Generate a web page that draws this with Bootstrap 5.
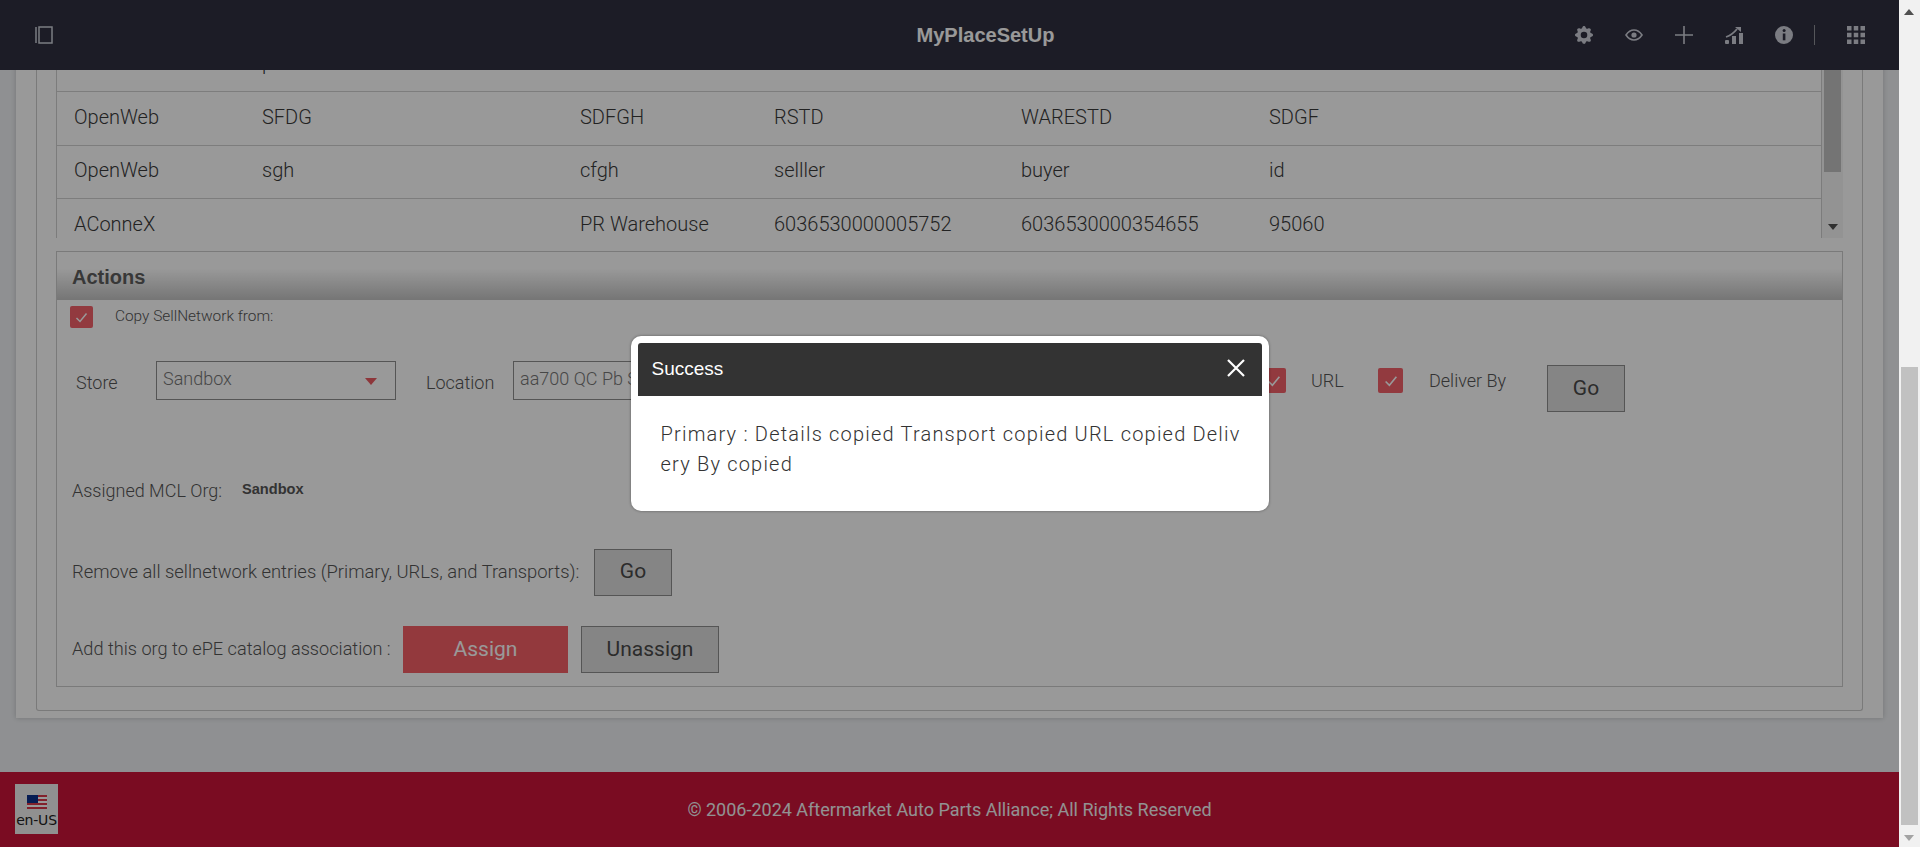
<!DOCTYPE html>
<html lang="en">
<head>
  <meta charset="UTF-8" />
  <meta name="viewport" content="width=device-width, initial-scale=1" />
  <title>MyPlaceSetUp</title>
  <link href="https://cdn.jsdelivr.net/npm/bootstrap@5.3.0/dist/css/bootstrap.min.css" rel="stylesheet" />
  <style>
    html, body { height: 100%; overflow: hidden; }
    body { font-family: Roboto, "Liberation Sans", sans-serif; color: #474747; background: #eef0f3; }

    /* shell */
    .app-main { position: relative; min-width: 0; }
    .top-bar { height: 70px; background: #2f3040; color: #cdcfd9; padding: 0 34px 0 35px; position: relative; z-index: 1; }
    .top-title { font-family: "Liberation Sans", sans-serif; font-size: 20px; font-weight: 700; color: #fff; position: absolute; left: 72px; right: 0; text-align: center; line-height: 70px; }
    .top-icons { margin-left: auto; gap: 32px; position: relative; }
    .top-icons svg { display: block; }
    .top-sep { width: 1px; height: 20px; background: #8e8f96; margin-left: -11px; }
    .page-clip { flex: 1 1 0; min-height: 0; overflow: hidden; padding: 0 16px 54px; }
    .page-foot { height: 75px; background: #cb143a; color: #f3f3f3; font-size: 18px; position: relative; flex: none; }
    .lang-tile { position: absolute; left: 15px; top: 12px; width: 43px; height: 50px; background: #f0f0f0; color: #222; font-family: "DejaVu Sans", sans-serif; font-size: 14px; letter-spacing: -.2px; line-height: 1; padding-top: 11px; }

    /* panels */
    .outer-sheet { flex: none; background: #fff; padding: 0 0 7px; box-shadow: 0 0 5px rgba(0,0,0,.2); }
    .inner-sheet { border: 1px solid #cbcbcb; border-top: 0; margin: 0 20px; padding: 0 19px 23px; border-radius: 0 0 3px 3px; }
    .grid-wrap { height: 200px; overflow: hidden; border-left: 1px solid #cfcfcf; }
    .grid-table { table-layout: fixed; font-size: 20px; font-weight: 300; margin: 0; color: #3a3a3a; }
    .grid-table td { height: 53.5px; padding: 0 17px 3px; vertical-align: middle; border-bottom: 1px solid #d0d0d0; white-space: nowrap; }
    .grid-table tr:last-child td { border-bottom: 0; }
    .col-a { width: 188px; } .col-b { width: 318px; } .col-c { width: 194px; }
    .col-d { width: 247px; } .col-e { width: 248px; }
    .fake-track { width: 22px; flex: none; background: #f6f6f6; border-left: 1px solid #cfcfcf; position: relative; }
    .fake-thumb { height: 134px; margin: 0 2px; background: #c1c1c1; }
    .arrow-down { position: absolute; left: 6px; bottom: 8px; border: 5px solid transparent; border-top: 6px solid #505050; border-bottom: 0; }

    .action-panel { border: 1px solid #cbcbcb; margin-top: 13px; padding-bottom: 13px; color: #555; font-size: 18px; font-weight: 300; }
    .action-head { height: 48px; background: linear-gradient(#fff 35%, #c4c4c4); font-family: "Liberation Sans", sans-serif; font-size: 20px; font-weight: 700; color: #5e5e5e; padding-left: 15px; line-height: 50px; }
    .tick { width: 25px; height: 25px; background: #f4616a; border-radius: 2px; flex: none; display: flex; align-items: center; justify-content: center; }
    .tick-small { width: 23px; height: 22px; }
    .row-copy { margin: 6px 0 0 13px; height: 22px; font-size: 15.4px; }
    .copy-label { margin-left: 22px; }
    .row-store { margin-top: 33px; height: 51px; padding-left: 19px; }
    .row-assigned { margin-top: 68px; height: 20px; padding-left: 15px; }
    .row-remove { margin-top: 49px; height: 46px; padding-left: 15px; }
    .row-add { margin-top: 31px; height: 47px; padding-left: 15px; }
    .field-label { line-height: 44px; }
    .store-label { width: 80px; }
    .location-label { margin-left: 30px; width: 87px; }
    .fake-select, .fake-input { width: 240px; height: 39px; border: 1px solid #8e8e8e; color: #777; padding-left: 6px; line-height: 34px; position: relative; flex: none; }
    .select-caret { position: absolute; right: 18px; top: 16px; border: 6px solid transparent; border-top: 7px solid #ec5a62; border-bottom: 0; }
    .tick-group { margin-left: 508px; margin-top: 7px; }
    .url-label { margin-left: 25px; width: 67px; line-height: 26px; }
    .deliver-label { margin-left: 26px; width: 118px; line-height: 26px; }
    .assigned-label { width: 170px; }
    .remove-label { width: 522px; font-size: 18.4px; }
    .add-label { width: 331px; font-size: 18.15px; padding-bottom: 2px; }
    .plain-btn { height: 47px; width: 78px; background: #dedede; border: 1px solid #8e8e8e; border-radius: 0; color: #4a4a4a; font-size: 21px; font-weight: 400; padding: 0; flex: none; }
    .go-top { margin-top: 4px; }
    .unassign-btn { width: 138px; margin-left: 13px; }
    .red-btn { height: 47px; width: 165px; background: #f55f67; border: 0; border-radius: 0; color: #fff; font-size: 21px; font-weight: 400; padding: 0; }
    .tiny-bold { font-family: "Liberation Sans", sans-serif; font-size: 14.6px; font-weight: 700; color: #555; }

    /* dialog on top */
    .dim-layer { position: absolute; inset: 0; width: auto; height: auto; background: #000; opacity: .4; z-index: 5; }
    .modal.dialog-host { position: absolute; inset: 0; width: auto; height: auto; z-index: 6; overflow: hidden; }
    .dialog-host .modal-dialog { max-width: 638px; margin: 336px auto 0; }
    .dialog-host .modal-content { border: 0; border-radius: 10px; padding: 7px; height: 175px; box-shadow: 0 0 3px rgba(0,0,0,.4); }
    .dialog-host .modal-header { height: 53px; background: #333; border: 0; border-radius: 3px 3px 0 0; padding: 0 17px 3px 14px; color: #fff; }
    .dialog-host .modal-title { font-family: "Liberation Sans", sans-serif; font-size: 19px; line-height: 1; }
    .dialog-host .modal-body { padding: 23px 17px 0 23px; font-size: 20px; font-weight: 300; line-height: 30px; letter-spacing: 1.2px; color: #333; word-break: break-all; }
    .close-x { background: none; border: 0; padding: 0; line-height: 0; }

    /* browser scrollbar */
    .page-scroll { width: 21px; flex: none; background: #f1f1f1; position: relative; }
    .page-thumb { position: absolute; left: 2px; right: 2px; top: 367px; height: 458px; background: #c1c1c1; }
    .bar-up { position: absolute; left: 5px; top: 9px; border: 5px solid transparent; border-bottom: 6px solid #505050; border-top: 0; }
    .bar-down { position: absolute; left: 5px; bottom: 6px; border: 5px solid transparent; border-top: 6px solid #a3a3a3; border-bottom: 0; }
  </style>
</head>
<body>
  <div class="d-flex vh-100">
    <div class="app-main d-flex flex-column flex-grow-1">

      <header class="top-bar d-flex align-items-center">
        <svg width="18" height="18" viewBox="0 0 18 18" fill="none" stroke="currentColor" stroke-width="1.5"><path d="M1 1v16"/><rect x="4" y="1" width="13" height="16"/></svg>
        <div class="top-title">MyPlaceSetUp</div>
        <div class="top-icons d-flex align-items-center">
          <svg width="18" height="18" viewBox="0 0 16 16" fill="currentColor"><path d="M9.405 1.05c-.413-1.4-2.397-1.4-2.81 0l-.1.34a1.464 1.464 0 0 1-2.105.872l-.31-.17c-1.283-.698-2.686.705-1.987 1.987l.169.311c.446.82.023 1.841-.872 2.105l-.34.1c-1.4.413-1.4 2.397 0 2.81l.34.1a1.464 1.464 0 0 1 .872 2.105l-.17.31c-.698 1.283.705 2.686 1.987 1.987l.311-.169a1.464 1.464 0 0 1 2.105.872l.1.34c.413 1.4 2.397 1.4 2.81 0l.1-.34a1.464 1.464 0 0 1 2.105-.872l.31.17c1.283.698 2.686-.705 1.987-1.987l-.169-.311a1.464 1.464 0 0 1 .872-2.105l.34-.1c1.4-.413 1.4-2.397 0-2.81l-.34-.1a1.464 1.464 0 0 1-.872-2.105l.17-.31c.698-1.283-.705-2.686-1.987-1.987l-.311.169a1.464 1.464 0 0 1-2.105-.872l-.1-.34zM8 10.93a2.929 2.929 0 1 1 0-5.86 2.929 2.929 0 0 1 0 5.858z"/></svg>
          <svg width="18" height="12" viewBox="0 0 18 12" fill="none" stroke="currentColor" stroke-width="1.6"><path d="M1 6c2-3 5-5 8-5s6 2 8 5c-2 3-5 5-8 5s-6-2-8-5z"/><circle cx="9" cy="6" r="2.6" fill="currentColor" stroke="none"/></svg>
          <svg width="18" height="18" viewBox="0 0 18 18" stroke="currentColor" stroke-width="1.6"><path d="M9 0v18M0 9h18"/></svg>
          <svg width="18" height="18" viewBox="0 0 18 18" fill="currentColor"><rect x="0" y="14" width="4" height="4" rx="1"/><rect x="7" y="10" width="4" height="8"/><rect x="14" y="7" width="4" height="11"/><path d="M1 11C4 10 8 8 12 3" fill="none" stroke="currentColor" stroke-width="1.8"/><path d="M10 1h6v5z"/></svg>
          <svg width="18" height="18" viewBox="0 0 18 18"><circle cx="9" cy="9" r="9" fill="currentColor"/><rect x="7.8" y="7.5" width="2.6" height="6.8" fill="#2f3040"/><circle cx="9.1" cy="4.6" r="1.5" fill="#2f3040"/></svg>
          <span class="top-sep"></span>
          <svg width="18" height="18" viewBox="0 0 18 18" fill="currentColor"><rect width="4.5" height="4.5"/><rect x="6.75" width="4.5" height="4.5"/><rect x="13.5" width="4.5" height="4.5"/><rect y="6.75" width="4.5" height="4.5"/><rect x="6.75" y="6.75" width="4.5" height="4.5"/><rect x="13.5" y="6.75" width="4.5" height="4.5"/><rect y="13.5" width="4.5" height="4.5"/><rect x="6.75" y="13.5" width="4.5" height="4.5"/><rect x="13.5" y="13.5" width="4.5" height="4.5"/></svg>
        </div>
      </header>

      <main class="page-clip d-flex flex-column justify-content-end">
        <div class="outer-sheet">
          <div class="inner-sheet">
            <div class="grid-wrap d-flex">
              <div class="flex-grow-1">
                <table class="table grid-table">
                  <colgroup><col class="col-a"><col class="col-b"><col class="col-c"><col class="col-d"><col class="col-e"><col></colgroup>
                  <tbody id="gridBody"></tbody>
                </table>
              </div>
              <div class="fake-track"><div class="fake-thumb"></div><span class="arrow-down"></span></div>
            </div>

            <section class="action-panel">
              <div class="action-head">Actions</div>
              <div class="row-copy d-flex align-items-center">
                <span class="tick tick-small"><svg width="13" height="11" viewBox="0 0 13 11" fill="none" stroke="#fff" stroke-width="1.5"><path d="M1.5 6l3.5 3.5L11.5 1.5"/></svg></span>
                <span class="copy-label">Copy SellNetwork from:</span>
              </div>
              <div class="row-store d-flex align-items-start">
                <span class="field-label store-label">Store</span>
                <div class="fake-select">Sandbox<span class="select-caret"></span></div>
                <span class="field-label location-label">Location</span>
                <div class="fake-input overflow-hidden text-nowrap">aa700 QC Pb Sandbox</div>
                <div class="tick-group d-flex align-items-start">
                  <span class="tick"><svg width="14" height="12" viewBox="0 0 13 11" fill="none" stroke="#fff" stroke-width="1.5"><path d="M1.5 6l3.5 3.5L11.5 1.5"/></svg></span>
                  <span class="url-label">URL</span>
                  <span class="tick"><svg width="14" height="12" viewBox="0 0 13 11" fill="none" stroke="#fff" stroke-width="1.5"><path d="M1.5 6l3.5 3.5L11.5 1.5"/></svg></span>
                  <span class="deliver-label">Deliver By</span>
                </div>
                <button type="button" class="btn plain-btn go-top">Go</button>
              </div>
              <div class="row-assigned d-flex align-items-center">
                <span class="assigned-label">Assigned MCL Org:</span>
                <span class="tiny-bold">Sandbox</span>
              </div>
              <div class="row-remove d-flex align-items-center">
                <span class="remove-label">Remove all sellnetwork entries (Primary, URLs, and Transports):</span>
                <button type="button" class="btn plain-btn">Go</button>
              </div>
              <div class="row-add d-flex align-items-center">
                <span class="add-label">Add this org to ePE catalog association :</span>
                <button type="button" class="btn red-btn">Assign</button>
                <button type="button" class="btn plain-btn unassign-btn">Unassign</button>
              </div>
            </section>
          </div>
        </div>
      </main>

      <footer class="page-foot d-flex align-items-center justify-content-center">
        <div class="lang-tile text-center">
          <svg class="d-block mx-auto mb-1" width="20" height="14" viewBox="0 0 20 14"><rect width="20" height="14" fill="#fff"/><path d="M0 1h20M0 5h20M0 9h20M0 13h20" stroke="#d9384a" stroke-width="2"/><rect width="11" height="8" fill="#0b2f8a"/></svg>
          en-US
        </div>
        <span>© 2006-2024 Aftermarket Auto Parts Alliance; All Rights Reserved</span>
      </footer>

      <div class="modal-backdrop dim-layer"></div>
      <div class="modal d-block dialog-host">
        <div class="modal-dialog">
          <div class="modal-content">
            <div class="modal-header justify-content-between">
              <h5 class="modal-title">Success</h5>
              <button type="button" class="close-x" aria-label="Close"><svg width="18" height="18" viewBox="0 0 18 18" stroke="#fff" stroke-width="2.2"><path d="M1 1l16 16M17 1L1 17"/></svg></button>
            </div>
            <div class="modal-body">Primary : Details copied Transport copied URL copied Delivery By copied</div>
          </div>
        </div>
      </div>
    </div>

    <div class="page-scroll"><span class="bar-up"></span><div class="page-thumb"></div><span class="bar-down"></span></div>
  </div>

  <script src="https://cdn.jsdelivr.net/npm/bootstrap@5.3.0/dist/js/bootstrap.bundle.min.js"></script>
  <script>
    // table rows
    const rows = [
      ['', 'plant', '', '', '', ''],
      ['OpenWeb', 'SFDG', 'SDFGH', 'RSTD', 'WARESTD', 'SDGF'],
      ['OpenWeb', 'sgh', 'cfgh', 'selller', 'buyer', 'id'],
      ['AConneX', '', 'PR Warehouse', '6036530000005752', '6036530000354655', '95060']
    ];
    const gridBody = document.getElementById('gridBody');
    rows.forEach(r => {
      const tr = document.createElement('tr');
      r.forEach(v => {
        const td = document.createElement('td');
        td.textContent = v;
        tr.appendChild(td);
      });
      gridBody.appendChild(tr);
    });
  </script>
</body>
</html>
